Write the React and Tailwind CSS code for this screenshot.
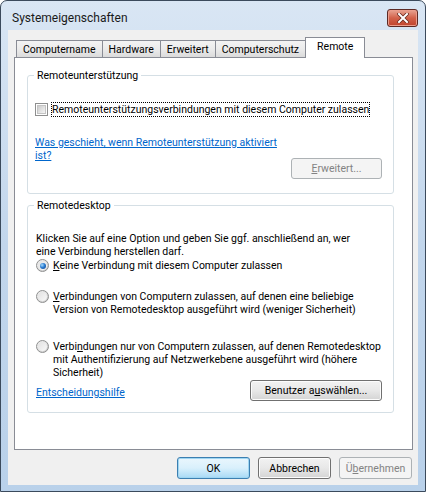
const btn =
  "h-[21px] rounded-[3px] border border-[#707070] bg-gradient-to-b from-[#f2f2f2] via-[#e8e8e8] to-[#d4d4d4] shadow-[inset_0_0_0_1px_#fcfcfc] flex items-center justify-center text-black";

function Button({ children, className = "", disabled, primary }) {
  if (disabled) {
    return (
      <div className={`h-[21px] rounded-[3px] border border-[#adb2b5] bg-[#f4f4f4] flex items-center justify-center text-[#838383] ${className}`}>
        {children}
      </div>
    );
  }
  if (primary) {
    return (
      <div className={`h-[21px] rounded-[3px] border border-[#3c7fb1] bg-gradient-to-b from-[#eaf6fd] via-[#d9f0fc] to-[#a7d9f5] shadow-[inset_0_0_0_1px_#9fd6f2] flex items-center justify-center text-black ${className}`}>
        {children}
      </div>
    );
  }
  return <div className={`${btn} ${className}`}>{children}</div>;
}

function Radio({ checked }) {
  return (
    <div className="w-[13px] h-[13px] shrink-0 rounded-full border border-[#8e8f8f] bg-gradient-to-br from-[#f4f4f4] to-[#c9c9c9] flex items-center justify-center">
      <div className="w-[9px] h-[9px] rounded-full bg-gradient-to-br from-[#e2e2e2] to-[#f8f8f8] flex items-center justify-center">
        {checked && (
          <div className="w-[6px] h-[6px] rounded-full bg-[radial-gradient(circle_at_35%_35%,#a8dcff_0%,#2a7cd0_45%,#0c3c86_100%)]" />
        )}
      </div>
    </div>
  );
}

function Group({ title, className = "", children }) {
  return (
    <div className={`relative rounded-[3px] border border-[#d5dfe5] ${className}`}>
      <span className="absolute left-[6px] top-[-8px] bg-white px-[3px] leading-[15px]">{title}</span>
      {children}
    </div>
  );
}

const tabs = ["Computername", "Hardware", "Erweitert", "Computerschutz"];

export default function App() {
  return (
    <div className="w-[428px] h-[494px] bg-white font-['Roboto',sans-serif] text-[10.5px] leading-[13px] text-black">
      <div className="w-[426px] h-[492px] rounded-t-[7px] border border-[#3b4a5c] bg-gradient-to-b from-[#d9e6f4] via-[#c2d6ec] to-[#b9d1ea] flex flex-col pb-[6px]">
        {/* title bar */}
        <div className="h-[29px] flex items-start justify-between pl-[11px] pr-[7px]">
          <span className="mt-[10px] text-[12px] leading-[14px] text-[#1a1a1a]">Systemeigenschaften</span>
          <div className="mt-[8px] w-[31px] h-[18px] rounded-[3px] border border-[#5c2a25] bg-gradient-to-b from-[#e8a493] via-[#d2614a] to-[#c0432c] shadow-[inset_0_0_0_1px_#eb9d8c] flex items-center justify-center">
            <svg width="12" height="10" viewBox="0 0 12 10">
              <path d="M2 1 L10 9 M10 1 L2 9" stroke="#6b2a20" strokeWidth="3.6" strokeLinecap="square" />
              <path d="M2 1 L10 9 M10 1 L2 9" stroke="#ffffff" strokeWidth="2" strokeLinecap="square" />
            </svg>
          </div>
        </div>

        {/* client area */}
        <div className="mx-[7px] flex-1 bg-[#f0f0f0] flex flex-col">
          {/* tab strip */}
          <div className="flex items-end h-[27px] pl-[8px]">
            {tabs.map((t) => (
              <div
                key={t}
                className="h-[17px] px-[6px] border border-b-0 border-[#898c95] -ml-px first:ml-0 bg-gradient-to-b from-[#f3f3f3] via-[#ebebeb] to-[#dbdbdb] flex items-center pt-[1px]"
              >
                {t}
              </div>
            ))}
            <div className="relative z-10 h-[21px] -mb-px px-[11px] border border-b-0 border-[#898c95] -ml-px bg-white flex items-start pt-[2px]">
              Remote
            </div>
          </div>

          {/* tab page */}
          <div className="ml-[6px] w-[399px] h-[393px] border border-[#898c95] bg-white pl-[12px] pr-[18px] pt-[17px]">
            <Group title="Remoteunterstützung" className="h-[119px] px-[7px] pt-[26px]">
              <div className="flex items-center">
                <div className="w-[13px] h-[13px] border border-[#8e8f8f] bg-white flex items-center justify-center">
                  <div className="w-[9px] h-[9px] bg-gradient-to-br from-[#cbcbcb] to-[#f6f6f6] border border-[#c4c4c4]" />
                </div>
                <span className="ml-[3px] px-[1px] py-[1px] outline outline-1 outline-dotted outline-black -outline-offset-1">
                  Remoteunterstützungsverbindungen mit diesem Computer zulassen
                </span>
              </div>
              <div className="mt-[19px] w-[260px] text-[#0066cc] underline">
                Was geschieht, wenn Remoteunterstützung aktiviert ist?
              </div>
              <div className="flex justify-end -mt-[4px] pr-[4px]">
                <Button disabled className="w-[91px]">
                  <span>
                    <u>E</u>rweitert...
                  </span>
                </Button>
              </div>
            </Group>

            <Group title="Remotedesktop" className="mt-[11px] h-[208px] px-[8px] pt-[26px]">
              <p className="w-[330px]">
                Klicken Sie auf eine Option und geben Sie ggf. anschließend an, wer eine Verbindung herstellen darf.
              </p>
              <div className="mt-[1px] flex items-start gap-[4px]">
                <Radio checked />
                <span>
                  <u>K</u>eine Verbindung mit diesem Computer zulassen
                </span>
              </div>
              <div className="mt-[18px] flex items-start gap-[4px]">
                <Radio />
                <span className="w-[330px]">
                  <u>V</u>erbindungen von Computern zulassen, auf denen eine beliebige Version von Remotedesktop ausgeführt wird (weniger Sicherheit)
                </span>
              </div>
              <div className="mt-[24px] flex items-start gap-[4px]">
                <Radio />
                <span className="w-[330px]">
                  Verbi<u>n</u>dungen nur von Computern zulassen, auf denen Remotedesktop mit Authentifizierung auf Netzwerkebene ausgeführt wird (höhere Sicherheit)
                </span>
              </div>
              <div className="mt-[1px] flex items-end justify-between pr-[3px]">
                <span className="mb-[2px] text-[#0066cc] underline">Entscheidungshilfe</span>
                <Button className="w-[132px]">
                  <span>
                    Benutzer a<u>u</u>swählen...
                  </span>
                </Button>
              </div>
            </Group>
          </div>

          {/* dialog buttons */}
          <div className="mt-[7px] flex justify-end gap-[8px] pr-[6px]">
            <Button primary className="w-[73px] h-[22px]">OK</Button>
            <Button className="w-[73px] h-[22px]">Abbrechen</Button>
            <Button disabled className="w-[73px] h-[22px]">
              <span>
                Ü<u>b</u>ernehmen
              </span>
            </Button>
          </div>
        </div>
      </div>
    </div>
  );
}
